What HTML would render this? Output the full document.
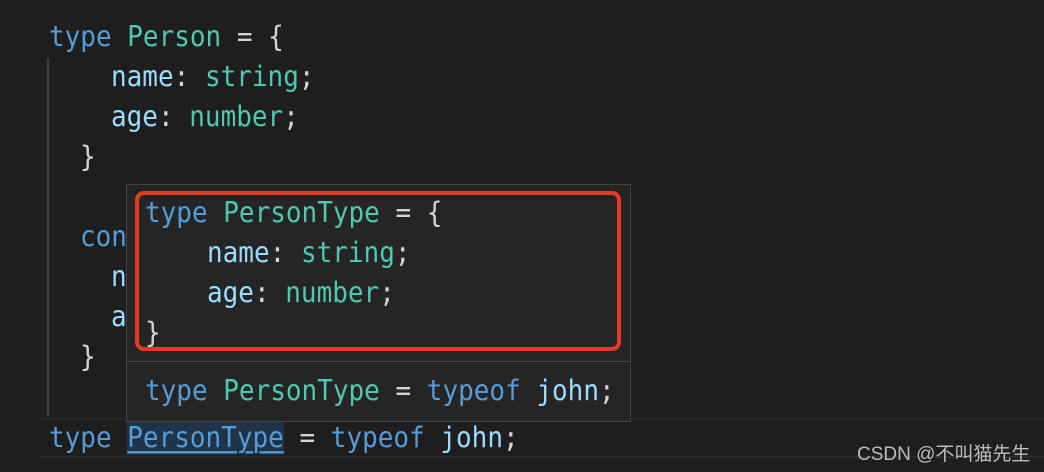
<!DOCTYPE html>
<html><head><meta charset="utf-8"><style>
html,body{margin:0;padding:0}
body{width:1044px;height:472px;background:#1e1e1e;position:relative;overflow:hidden;font-family:"DejaVu Sans Mono","Liberation Mono",monospace;}
.l{position:absolute;font-size:26px;line-height:40px;white-space:pre;color:#d4d4d4;transform:scaleY(1.1);transform-origin:left center}
.k{color:#569cd6}.t{color:#4ec9b0}.p{color:#9cdcfe}
.guide{position:absolute;left:47px;top:58px;width:2px;height:358px;background:#404040}
.cur{position:absolute;left:40px;top:418px;width:1010px;height:36px;border-top:2px solid #2a2a2a;border-bottom:2px solid #2a2a2a}
.hover{position:absolute;left:126px;top:184px;width:503px;height:236px;background:#252526;border:1px solid #454545}
.sep{position:absolute;left:127px;top:361px;width:503px;height:1px;background:#454545}
.red{position:absolute;left:135px;top:191px;width:478px;height:152px;border:4px solid #e33b27;border-radius:9px}
.wm{position:absolute;left:857px;top:439px;font-family:"Liberation Sans","Noto Sans CJK SC",sans-serif;font-size:19px;color:#bdbdbd}
.hl{background:#1f3448;text-decoration:underline;text-underline-offset:4px;text-decoration-thickness:2px}
</style></head><body>
<div class="guide"></div>
<div class="l" style="left:49px;top:17px"><span class="k">type</span> <span class="t">Person</span> = {</div>
<div class="l" style="left:111px;top:57px"><span class="p">name</span>: <span class="t">string</span>;</div>
<div class="l" style="left:111px;top:97px"><span class="p">age</span>: <span class="t">number</span>;</div>
<div class="l" style="left:80px;top:137px">}</div>
<div class="l" style="left:80px;top:217px"><span class="k">const</span></div>
<div class="l" style="left:111px;top:257px"><span class="p">n</span></div>
<div class="l" style="left:111px;top:297px"><span class="p">a</span></div>
<div class="l" style="left:80px;top:337px">}</div>
<div class="cur"></div>
<div class="l" style="left:49px;top:418px"><span class="k">type</span> <span class="k hl">PersonType</span> = <span class="k">typeof</span> <span class="p">john</span>;</div>
<div class="hover"></div>
<div class="sep"></div>
<div class="l" style="left:145px;top:193px"><span class="k">type</span> <span class="t">PersonType</span> = {</div>
<div class="l" style="left:207px;top:233px"><span class="p">name</span>: <span class="t">string</span>;</div>
<div class="l" style="left:207px;top:273px"><span class="p">age</span>: <span class="t">number</span>;</div>
<div class="l" style="left:145px;top:313px">}</div>
<div class="red"></div>
<div class="l" style="left:145px;top:371px"><span class="k">type</span> <span class="t">PersonType</span> = <span class="k">typeof</span> <span class="p">john</span>;</div>
<div class="wm">CSDN @不叫猫先生</div>
</body></html>
